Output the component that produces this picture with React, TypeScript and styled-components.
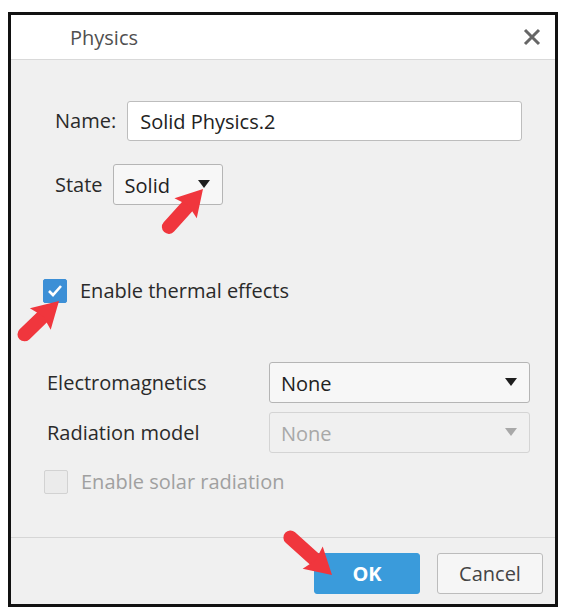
import React from "react";
import styled, { createGlobalStyle } from "styled-components";

const GlobalStyle = createGlobalStyle`
  html, body {
    margin: 0;
    padding: 0;
    background: #ffffff;
    font-family: "Open Sans", "Noto Sans", "Liberation Sans", sans-serif;
  }
`;

const Page = styled.div`
  position: relative;
  width: 562px;
  height: 615px;
  padding: 12px 0 0 8px;
  box-sizing: border-box;
`;

const Dialog = styled.div`
  width: 550px;
  height: 595px;
  box-sizing: border-box;
  border: 3px solid #111;
  background: #f0f0f0;
  display: flex;
  flex-direction: column;
`;

const Header = styled.div`
  height: 44px;
  background: #ffffff;
  border-bottom: 1px solid #d9d9d9;
  display: flex;
  align-items: center;
  justify-content: space-between;
  padding: 0 14px 0 59px;
`;

const Title = styled.span`
  font-size: 20px;
  color: #505050;
`;

const Close = styled.svg`
  width: 18px;
  height: 18px;
`;

const Body = styled.div`
  flex: 1;
  display: flex;
  flex-direction: column;
  padding: 41px 0 0 0;
`;

const Row = styled.div<{ $left: number; $gap: number; $mt?: number }>`
  display: flex;
  align-items: center;
  gap: ${(p) => p.$gap}px;
  padding-left: ${(p) => p.$left}px;
  margin-top: ${(p) => p.$mt ?? 0}px;
`;

const Label = styled.span<{ $width?: number; $muted?: boolean }>`
  font-size: 20px;
  line-height: 26px;
  color: ${(p) => (p.$muted ? "#a0a0a0" : "#2a2a2a")};
  width: ${(p) => (p.$width ? `${p.$width}px` : "auto")};
`;

const TextInput = styled.div`
  width: 395px;
  height: 40px;
  box-sizing: border-box;
  background: #ffffff;
  border: 1px solid #bdbdbd;
  border-radius: 3px;
  display: flex;
  align-items: center;
  padding-left: 12px;
  font-size: 20px;
  color: #222;
`;

const Select = styled.div<{ $width: number; $disabled?: boolean }>`
  width: ${(p) => p.$width}px;
  height: 41px;
  box-sizing: border-box;
  background: ${(p) => (p.$disabled ? "#f0f0f0" : "#f7f7f7")};
  border: 1px solid ${(p) => (p.$disabled ? "#d4d4d4" : "#b5b5b5")};
  border-radius: 3px;
  display: flex;
  align-items: center;
  justify-content: space-between;
  padding: 2px 12px 0 11px;
  font-size: 20px;
  color: ${(p) => (p.$disabled ? "#a8a8a8" : "#222")};
`;

const Caret = styled.span<{ $disabled?: boolean }>`
  width: 0;
  height: 0;
  border-left: 6px solid transparent;
  border-right: 6px solid transparent;
  border-top: 8px solid ${(p) => (p.$disabled ? "#a8a8a8" : "#1e1e1e")};
  margin-bottom: 4px;
`;

const Check = styled.span<{ $checked?: boolean }>`
  width: 24px;
  height: 24px;
  box-sizing: border-box;
  border-radius: 2px;
  background: ${(p) => (p.$checked ? "#3c8fd6" : "#ebebeb")};
  border: 1px solid ${(p) => (p.$checked ? "#3c8fd6" : "#d2d2d2")};
  display: flex;
  align-items: center;
  justify-content: center;
`;

const Spacer = styled.div`
  flex: 1;
`;

const Footer = styled.div`
  border-top: 1px solid #d6d6d6;
  display: flex;
  justify-content: flex-end;
  gap: 17px;
  padding: 15px 12px 10px 0;
`;

const Button = styled.button<{ $primary?: boolean }>`
  width: 106px;
  height: 41px;
  border-radius: 3px;
  font-family: inherit;
  font-size: 20px;
  font-weight: ${(p) => (p.$primary ? 700 : 400)};
  color: ${(p) => (p.$primary ? "#ffffff" : "#444")};
  background: ${(p) => (p.$primary ? "#3a9bdb" : "#f6f6f6")};
  border: 1px solid ${(p) => (p.$primary ? "#3a9bdb" : "#bcbcbc")};
  padding: 0;
`;

const Arrow = styled.svg<{ $x: number; $y: number; $len: number; $angle: number }>`
  position: absolute;
  left: ${(p) => p.$x - p.$len}px;
  top: ${(p) => p.$y - 16}px;
  width: ${(p) => p.$len}px;
  height: 32px;
  transform-origin: right center;
  transform: rotate(${(p) => p.$angle}deg);
  overflow: visible;
`;

const RedArrow = ({ x, y, len, angle }: { x: number; y: number; len: number; angle: number }) => (
  <Arrow $x={x} $y={y} $len={len} $angle={angle} viewBox={`0 0 ${len} 32`}>
    <line x1={7} y1={16} x2={len - 22} y2={16} stroke="#f0363d" strokeWidth={14} strokeLinecap="round" />
    <polygon points={`${len - 26},1 ${len},16 ${len - 26},31 ${len - 22},16`} fill="#f0363d" />
  </Arrow>
);

export default function App() {
  return (
    <>
      <GlobalStyle />
      <Page>
        <Dialog>
          <Header>
            <Title>Physics</Title>
            <Close viewBox="0 0 18 18">
              <path d="M2 2 L16 16 M16 2 L2 16" stroke="#666" strokeWidth={3} />
            </Close>
          </Header>
          <Body>
            <Row $left={44} $gap={11}>
              <Label>Name:</Label>
              <TextInput>Solid Physics.2</TextInput>
            </Row>
            <Row $left={44} $gap={10} $mt={23}>
              <Label>State</Label>
              <Select $width={110}>
                Solid
                <Caret />
              </Select>
            </Row>
            <Row $left={32} $gap={13} $mt={73}>
              <Check $checked>
                <svg width="16" height="14" viewBox="0 0 16 14">
                  <path d="M2 7 L6 11 L14 2" stroke="#fff" strokeWidth={2.6} fill="none" />
                </svg>
              </Check>
              <Label>Enable thermal effects</Label>
            </Row>
            <Row $left={36} $gap={0} $mt={58}>
              <Label $width={222}>Electromagnetics</Label>
              <Select $width={261}>
                None
                <Caret />
              </Select>
            </Row>
            <Row $left={36} $gap={0} $mt={9}>
              <Label $width={222}>Radiation model</Label>
              <Select $width={261} $disabled>
                None
                <Caret $disabled />
              </Select>
            </Row>
            <Row $left={33} $gap={13} $mt={16}>
              <Check />
              <Label $muted>Enable solar radiation</Label>
            </Row>
            <Spacer />
            <Footer>
              <Button $primary>OK</Button>
              <Button>Cancel</Button>
            </Footer>
          </Body>
        </Dialog>
        <RedArrow x={203} y={189} len={58} angle={-48} />
        <RedArrow x={59} y={301} len={55} angle={-44} />
        <RedArrow x={332} y={575} len={63} angle={42} />
      </Page>
    </>
  );
}
